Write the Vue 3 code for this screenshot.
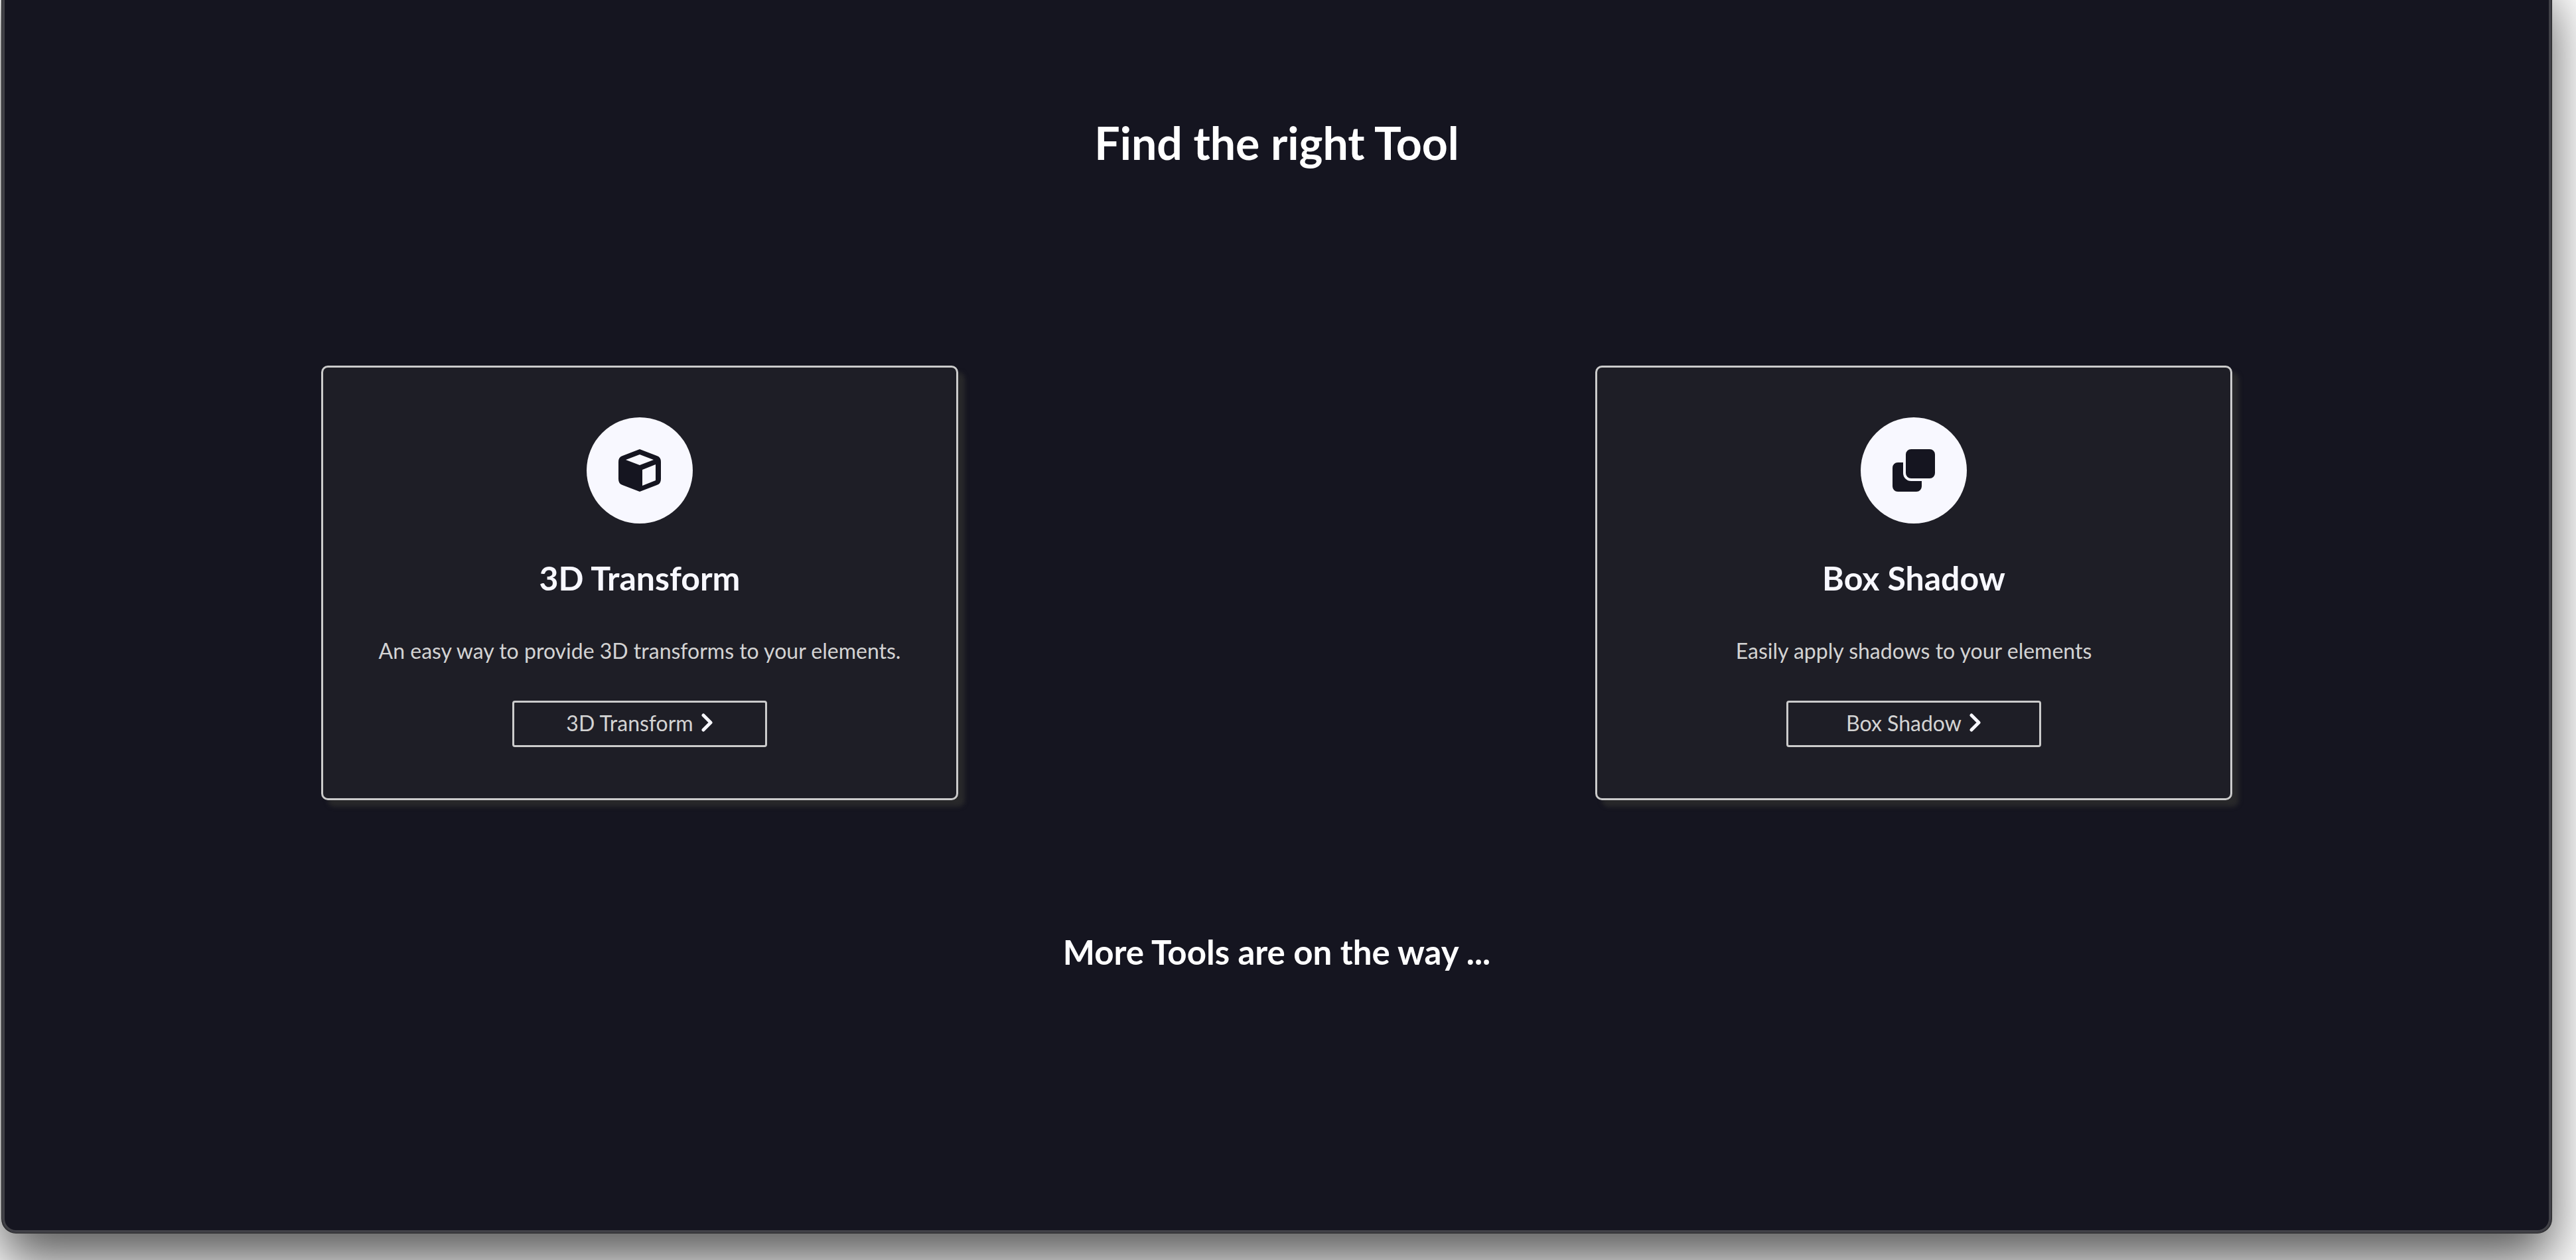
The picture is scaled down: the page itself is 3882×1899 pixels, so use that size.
<script setup>
const tools = [
  {
    name: '3D Transform',
    text: 'An easy way to provide 3D transforms to your elements.',
    icon: 'M32 0 58 10Q64 12 64 19V45Q64 52 58 54L32 64 6 54Q0 52 0 45V19Q0 12 6 10ZM32 8 11 16 32 24 53 16ZM36 31V55L56 47V23Z'
  },
  {
    name: 'Box Shadow',
    text: 'Easily apply shadows to your elements',
    icon: 'M28 0H56A8 8 0 0 1 64 8V36A8 8 0 0 1 56 44H28A8 8 0 0 1 20 36V8A8 8 0 0 1 28 0ZM8 20H16V36A12 12 0 0 0 28 48H44V56A8 8 0 0 1 36 64H8A8 8 0 0 1 0 56V28A8 8 0 0 1 8 20Z'
  }
]
</script>

<template>
  <div class="page">
    <main class="window">
      <h1>Find the right Tool</h1>
      <div class="tools">
        <article v-for="tool in tools" :key="tool.name" class="card">
          <span class="badge">
            <svg viewBox="0 0 64 64" aria-hidden="true">
              <path fill-rule="evenodd" :d="tool.icon" />
            </svg>
          </span>
          <h2>{{ tool.name }}</h2>
          <p>{{ tool.text }}</p>
          <button type="button">
            {{ tool.name }}
            <svg viewBox="0 0 18 28" aria-hidden="true">
              <path d="M3 3 14 14 3 25" />
            </svg>
          </button>
        </article>
      </div>
      <h2 class="more">More Tools are on the way ...</h2>
    </main>
  </div>
</template>

<style>
body {
  margin: 0;
  background: #fff;
}
</style>

<style scoped>
.page {
  overflow: hidden;
  padding-bottom: 42px;
  font-family: Lato, "Open Sans", sans-serif;
}

/* The window's top edge lies above the visible area. */
.window {
  box-sizing: border-box;
  margin: -40px 38px 0 4px;
  padding: 207px 0 390px;
  border-radius: 20px;
  background: #151520;
  box-shadow:
    inset 0 0 0 3px #414147,
    0 0 0 1px #414147,
    0 0 0 2px #222224,
    0 40px 80px 2px rgba(0, 0, 0, 0.65);
  color: #fff;
  text-align: center;
}

h1,
h2,
p {
  margin: 0;
}

h1 {
  font-size: 68px;
  line-height: 96px;
}

h2 {
  font-size: 50px;
  line-height: 64px;
}

.tools {
  display: grid;
  grid-template-columns: repeat(2, 1fr);
  justify-items: center;
  margin: 288px 0 197px;
}

.card {
  box-sizing: border-box;
  display: flex;
  flex-direction: column;
  align-items: center;
  width: 50%;
  padding: 75px 0 77px;
  border: 3px solid #cbcbcb;
  border-radius: 10px;
  background: #1e1e26;
  box-shadow: 10px 10px 6px #28282a;
  color: #f8f8ff;
}

.badge {
  display: flex;
  align-items: center;
  justify-content: center;
  width: 160px;
  height: 160px;
  margin-bottom: 50px;
  border-radius: 50%;
  background: #f8f8ff;
}

.badge svg {
  width: 64px;
  height: 64px;
  fill: #151520;
}

.card p {
  margin: 54px 0 51px;
  color: #d3d3d3;
  font-size: 32px;
  line-height: 48px;
}

button {
  box-sizing: border-box;
  display: flex;
  align-items: center;
  justify-content: center;
  gap: 12px;
  width: 40%;
  min-width: 384px;
  height: 70px;
  padding: 0 0 4px;
  border: 3px solid #cbcbcb;
  border-radius: 4px;
  background: transparent;
  color: #d3d3d3;
  font: inherit;
  font-size: 32px;
}

button svg {
  width: 18px;
  height: 28px;
  fill: none;
  stroke: #f8f8ff;
  stroke-width: 5;
  stroke-linecap: round;
  stroke-linejoin: round;
}

.more {
  font-size: 51px;
}
</style>
